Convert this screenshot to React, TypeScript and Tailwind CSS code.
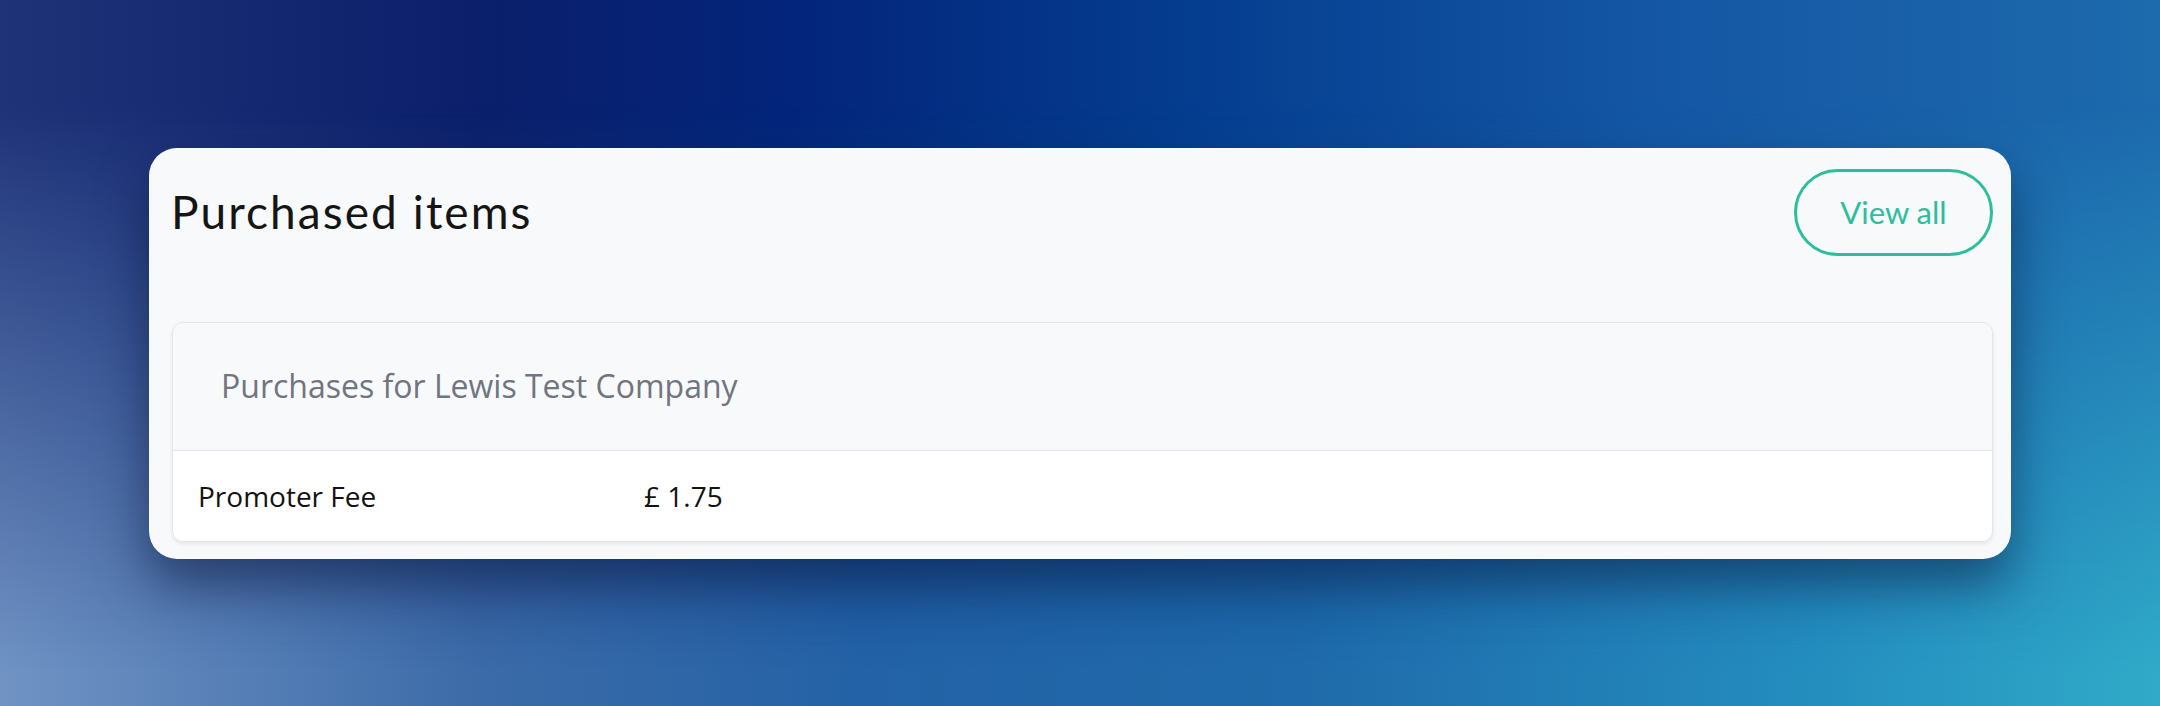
export default function App() {
  return (
    <main className="relative w-full h-[706px] flex items-center justify-center bg-[linear-gradient(90deg,#1f3378_0%,#0b1f6b_22%,#03247a_36%,#053e90_56%,#1456a4_76%,#1d6aad_100%)] before:content-[''] before:absolute before:inset-0 before:bg-[linear-gradient(90deg,#7093c4_0%,#3c6ba8_22%,#2362a6_40%,#1f6aaa_60%,#248ebf_84%,#30aac8_100%)] before:[mask-image:linear-gradient(to_bottom,transparent_15%,black_95%)]">
      <section className="relative z-10 w-[1862px] h-[411px] rounded-[28px] bg-[#f8f9fb] pt-[21px] pl-[22px] pr-[18px] shadow-[0_26px_50px_rgba(5,15,50,0.5)]">
        <div className="flex items-center justify-between h-[87px]">
          <h1 className="text-[46px] leading-none tracking-[0.045em] text-[#151515] font-['Lato',sans-serif] font-normal">
            Purchased items
          </h1>
          <button className="w-[199px] h-[87px] rounded-full border-[3px] border-[#2cbf9d] text-[#2cbf9d] text-[31px] font-['Lato',sans-serif]">
            View all
          </button>
        </div>
        <div className="mt-[66px] ml-px rounded-[11px] border border-[#e3e5ea] overflow-hidden shadow-[0_2px_4px_rgba(0,0,0,0.08)] font-['Open_Sans',sans-serif]">
          <div className="h-[128px] flex items-center pl-[48px] bg-[#f8f9fb] border-b border-[#e3e5ea]">
            <span className="text-[32px] text-[#70757f]">Purchases for Lewis Test Company</span>
          </div>
          <div className="h-[90px] flex items-center pl-[25px] bg-white text-[#121212] text-[28px]">
            <span className="w-[446px]">Promoter Fee</span>
            <span>£ 1.75</span>
          </div>
        </div>
      </section>
    </main>
  );
}
